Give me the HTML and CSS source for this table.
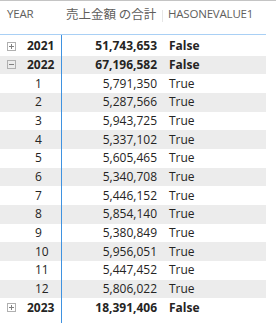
FILE: index.html
```html
<!DOCTYPE html>
<html lang="ja">
<head>
<meta charset="utf-8">
<title>Matrix</title>
<link rel="stylesheet" href="styles.css">
</head>
<body>
<div class="matrix">
  <div class="head">
    <div class="c c1">YEAR</div>
    <div class="c c2"><span class="jp">売上金額 の合計</span><span class="grip"></span></div>
    <div class="c c3">HASONEVALUE1</div>
  </div>
  <div class="body">
    <div class="row total">
      <div class="c c1"><svg class="exp" width="9" height="9" viewBox="0 0 9 9"><rect x="0.5" y="0.5" width="8" height="8" fill="none" stroke="#b0b0b0"/><path d="M2 4.5h5M4.5 2v5" stroke="#808080"/></svg><span>2021</span></div>
      <div class="c c2">51,743,653</div>
      <div class="c c3">False</div>
    </div>
    <div class="row total band">
      <div class="c c1"><svg class="exp" width="9" height="9" viewBox="0 0 9 9"><rect x="0.5" y="0.5" width="8" height="8" fill="none" stroke="#b0b0b0"/><path d="M2 4.5h5" stroke="#808080"/></svg><span>2022</span></div>
      <div class="c c2">67,196,582</div>
      <div class="c c3">False</div>
    </div>
    <div class="row"><div class="c c1 m">1</div><div class="c c2">5,791,350</div><div class="c c3">True</div></div>
    <div class="row band"><div class="c c1 m">2</div><div class="c c2">5,287,566</div><div class="c c3">True</div></div>
    <div class="row"><div class="c c1 m">3</div><div class="c c2">5,943,725</div><div class="c c3">True</div></div>
    <div class="row band"><div class="c c1 m">4</div><div class="c c2">5,337,102</div><div class="c c3">True</div></div>
    <div class="row"><div class="c c1 m">5</div><div class="c c2">5,605,465</div><div class="c c3">True</div></div>
    <div class="row band"><div class="c c1 m">6</div><div class="c c2">5,340,708</div><div class="c c3">True</div></div>
    <div class="row"><div class="c c1 m">7</div><div class="c c2">5,446,152</div><div class="c c3">True</div></div>
    <div class="row band"><div class="c c1 m">8</div><div class="c c2">5,854,140</div><div class="c c3">True</div></div>
    <div class="row"><div class="c c1 m">9</div><div class="c c2">5,380,849</div><div class="c c3">True</div></div>
    <div class="row band"><div class="c c1 m">10</div><div class="c c2">5,956,051</div><div class="c c3">True</div></div>
    <div class="row"><div class="c c1 m">11</div><div class="c c2">5,447,452</div><div class="c c3">True</div></div>
    <div class="row band"><div class="c c1 m">12</div><div class="c c2">5,806,022</div><div class="c c3">True</div></div>
    <div class="row total">
      <div class="c c1"><svg class="exp" width="9" height="9" viewBox="0 0 9 9"><rect x="0.5" y="0.5" width="8" height="8" fill="none" stroke="#b0b0b0"/><path d="M2 4.5h5M4.5 2v5" stroke="#808080"/></svg><span>2023</span></div>
      <div class="c c2">18,391,406</div>
      <div class="c c3">False</div>
    </div>
  </div>
</div>
</body>
</html>
```
FILE: styles.css
```css
* { box-sizing: border-box; }
html, body { margin: 0; padding: 0; background: #fff; }
body {
  width: 276px;
  height: 323px;
  overflow: hidden;
  font-family: "Open Sans", "Noto Sans CJK JP", sans-serif;
  font-size: 12px;
  color: #252423;
}
.matrix {
  height: 323px;
  border-top: 1px solid #c4c4c4;
  display: flex;
  flex-direction: column;
}
.head {
  width: 266px;
  height: 34px;
  border-bottom: 1px solid #a9d0f5;
  display: grid;
  grid-template-columns: 61px 102px 103px;
  align-items: start;
  padding-top: 4px;
  color: #605e5c;
  font-size: 11.5px;
  line-height: 18px;
}
.head .c1 { padding-left: 7px; letter-spacing: -0.2px; }
.head .c2 { padding-left: 5px; position: relative; }
.head .c3 { padding-left: 5px; letter-spacing: -0.2px; }
.jp { font-size: 12.5px; font-family: "Noto Sans CJK JP", sans-serif; }
.grip {
  position: absolute;
  right: 0;
  top: 5px;
  width: 1px;
  height: 12px;
  background: #e6e6e6;
}
.body {
  flex: 1;
  position: relative;
  padding-top: 2px;
}
.body::before {
  content: "";
  position: absolute;
  left: 61px;
  top: 0;
  bottom: 0;
  width: 1px;
  background: #3f92e0;
}
.row {
  width: 266px;
  height: 18.67px;
  display: grid;
  grid-template-columns: 61px 102px 103px;
  align-items: center;
  line-height: 18px;
}
.row.band { background: #ececec; }
.row.total { font-weight: 700; }
.row .c1 { display: flex; align-items: center; padding-left: 7px; }
.row .c1 .exp { flex: none; margin-right: 11px; }
.row .c1.m { padding-left: 35px; }
.row .c2 { text-align: right; padding-right: 6px; }
.row .c3 { padding-left: 6px; }
```
